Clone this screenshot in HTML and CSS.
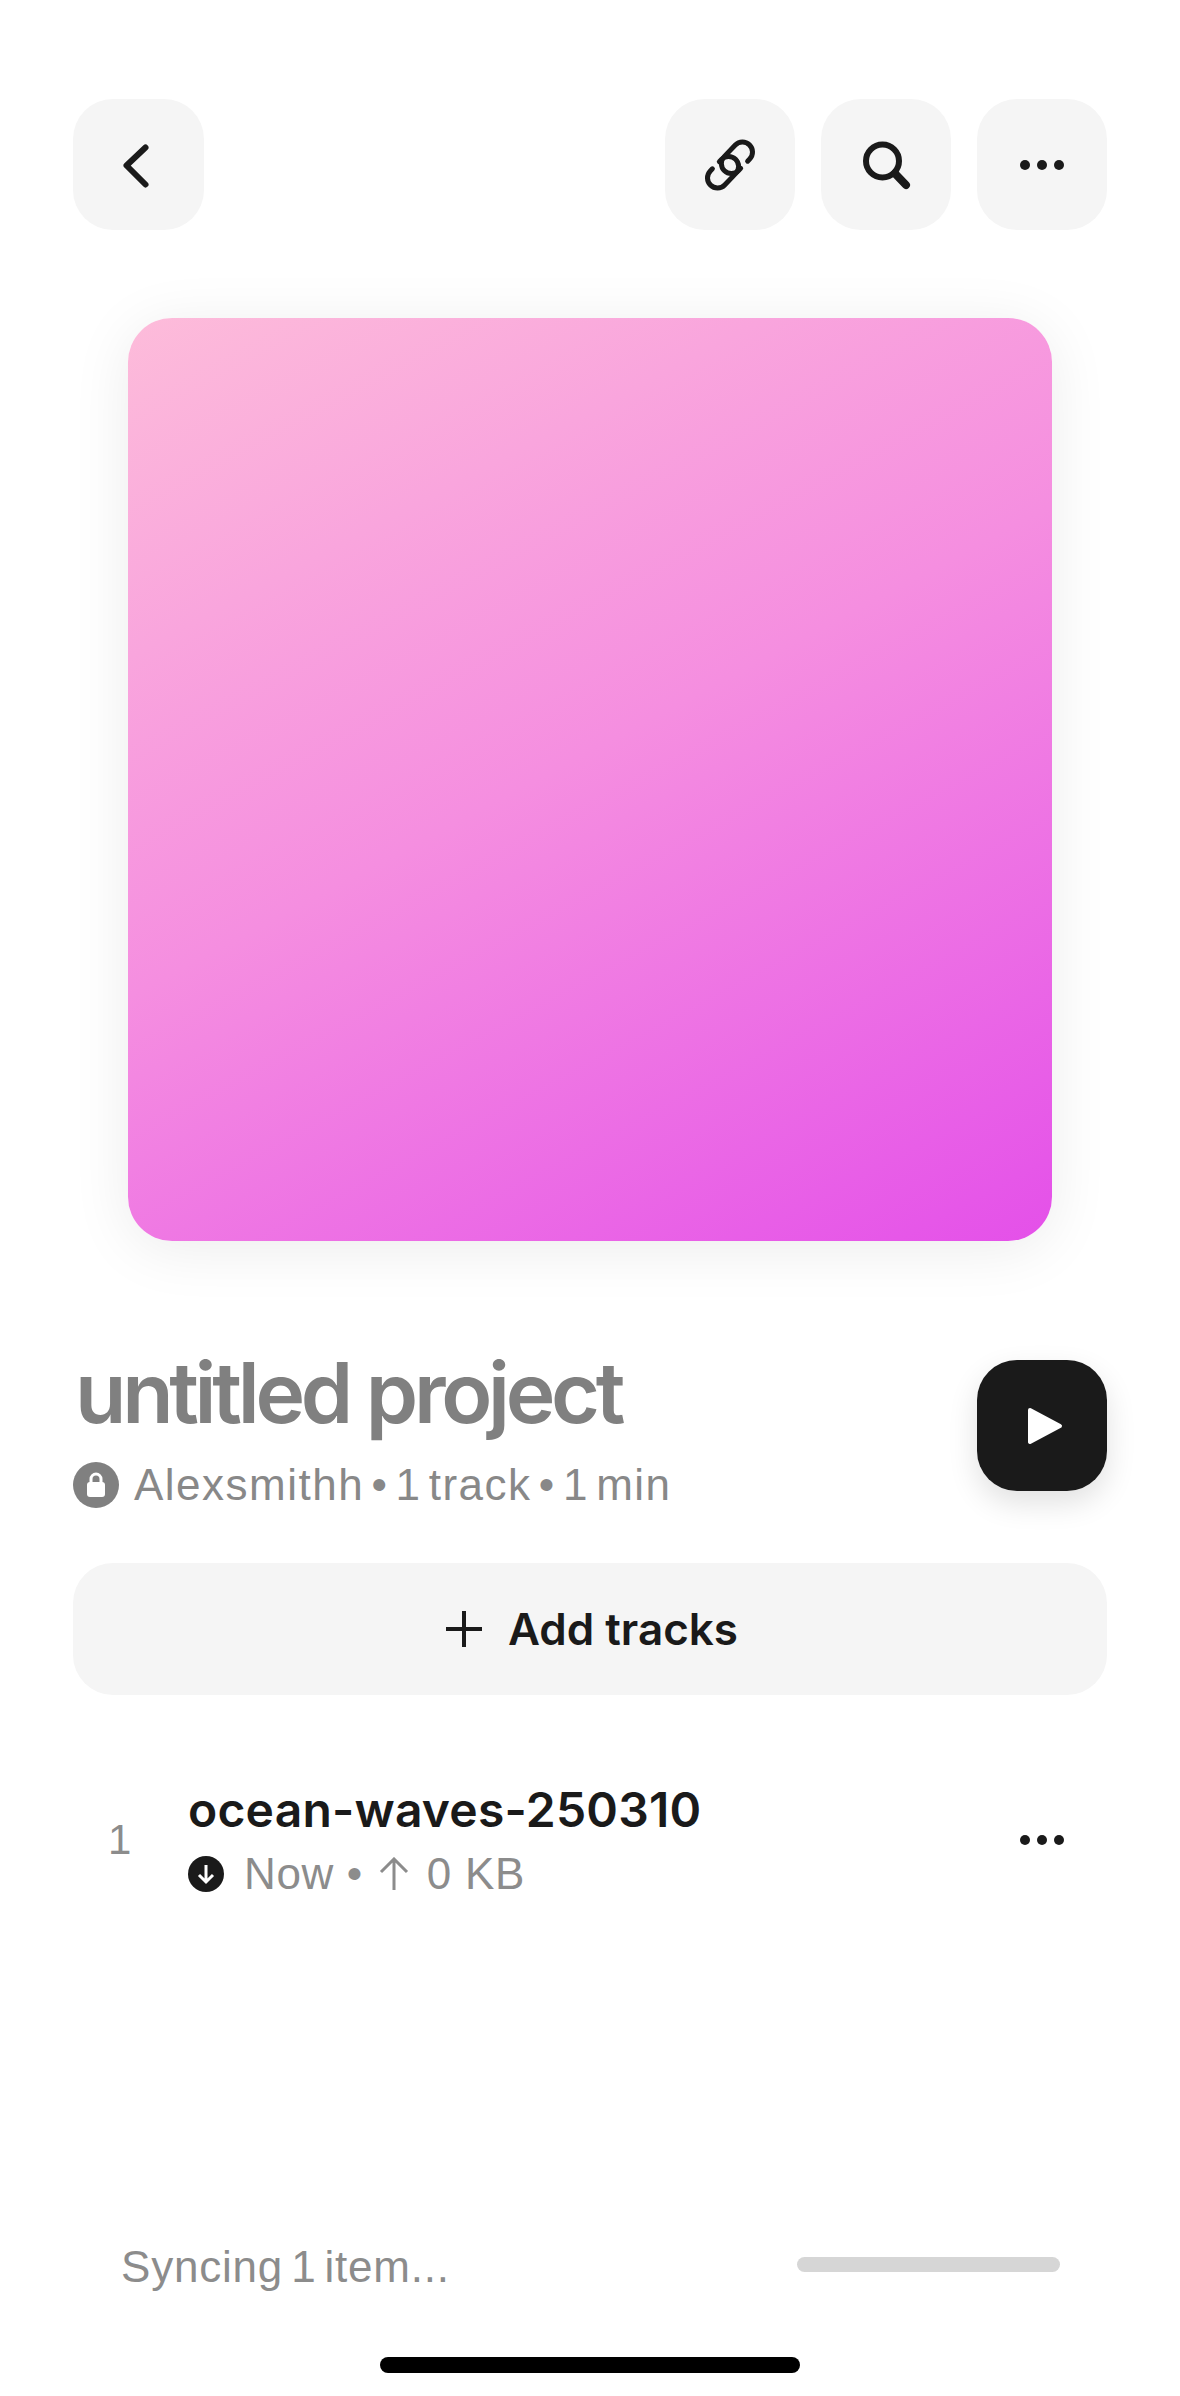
FILE: index.html
```html
<!DOCTYPE html>
<html lang="en">
<head>
    <meta charset="UTF-8">
    <meta name="viewport" content="width=device-width, initial-scale=1.0">
    <title>untitled project</title>
    <link rel="stylesheet" href="styles.css">
</head>
<body>
    <header class="top-bar">
        <button class="icon-btn back-btn">
            <svg width="60" height="60" viewBox="0 0 60 60"><path d="M36.5 12.5 L17.5 30.5 L36.5 49.5" class="line"/></svg>
        </button>
        <div class="top-actions">
            <button class="icon-btn">
                <svg width="60" height="60" viewBox="0 0 60 60">
                    <g transform="translate(30 30) rotate(-46)" class="line thin">
                        <path d="M-15 -10 H-18 A10 10 0 0 0 -18 10 H-2 A10 10 0 0 0 -2 -10 H-5"/>
                        <path d="M15 10 H18 A10 10 0 0 0 18 -10 H2 A10 10 0 0 0 2 10 H5"/>
                    </g>
                </svg>
            </button>
            <button class="icon-btn">
                <svg width="60" height="60" viewBox="0 0 60 60">
                    <circle cx="26.5" cy="26" r="16.5" class="line"/>
                    <path d="M39 38.5 L50 50" class="line heavy"/>
                </svg>
            </button>
            <button class="icon-btn">
                <span class="dots"><i></i><i></i><i></i></span>
            </button>
        </div>
    </header>

    <div class="cover"></div>

    <section class="project">
        <div class="project-info">
            <h1>untitled project</h1>
            <p class="meta">
                <span class="lock">
                    <svg width="24" height="28" viewBox="0 0 24 28"><path d="M7 12 V8 a5 5 0 0 1 10 0 V12" fill="none" stroke="#fff" stroke-width="3"/><rect x="3" y="11" width="18" height="15" rx="3" fill="#fff"/></svg>
                </span>
                Alexsmithh • 1 track • 1 min
            </p>
        </div>
        <button class="play-btn">
            <svg width="38" height="40" viewBox="0 0 38 40"><path d="M4 4 L34 20 L4 36 Z" fill="#fff" stroke="#fff" stroke-width="4" stroke-linejoin="round"/></svg>
        </button>
    </section>

    <button class="add-tracks">
        <svg width="38" height="38" viewBox="0 0 38 38"><path d="M19 1 V37 M1 19 H37" stroke="#1a1a1a" stroke-width="4" fill="none"/></svg>
        Add tracks
    </button>

    <div class="track">
        <span class="track-num">1</span>
        <div class="track-body">
            <div class="track-name">ocean-waves-250310</div>
            <div class="track-meta">
                <span class="status">
                    <svg width="20" height="22" viewBox="0 0 20 22"><path d="M10 2 V19 M3 12 L10 19 L17 12" stroke="#fff" stroke-width="3" fill="none"/></svg>
                </span>
                <span class="when">Now •</span>
                <svg class="up-arrow" width="32" height="34" viewBox="0 0 32 34"><path d="M16 33 V2 M3 15 L16 2 L29 15" stroke="#8c8c8c" stroke-width="3" fill="none"/></svg>
                <span class="size">0 KB</span>
            </div>
        </div>
        <span class="dots"><i></i><i></i><i></i></span>
    </div>

    <footer class="sync">
        <span class="sync-label">Syncing 1 item...</span>
        <span class="sync-bar"></span>
    </footer>

    <div class="home-bar"></div>
</body>
</html>
```

FILE: styles.css
```css
* {
    box-sizing: border-box;
}
body {
    margin: 0;
    padding: 99px 73px 23px;
    height: 2396px;
    background: #fff;
    font-family: "Liberation Sans", Arial, sans-serif;
    display: flex;
    flex-direction: column;
    overflow: hidden;
}
button {
    border: 0;
    padding: 0;
    font-family: inherit;
}
.line {
    fill: none;
    stroke: #1a1a1a;
    stroke-width: 6;
    stroke-linecap: round;
    stroke-linejoin: round;
}
.line.thin {
    stroke-width: 5;
}
.line.heavy {
    stroke-width: 8;
}
.top-bar {
    display: flex;
    justify-content: space-between;
}
.top-actions {
    display: flex;
    gap: 26px;
}
.icon-btn {
    width: 130px;
    height: 131px;
    border-radius: 40px;
    background: #f5f5f5;
    display: flex;
    align-items: center;
    justify-content: center;
}
.back-btn {
    width: 131px;
}
.dots {
    display: flex;
    gap: 7px;
}
.dots i {
    width: 10px;
    height: 10px;
    border-radius: 50%;
    background: #1a1a1a;
}
.cover {
    width: 924px;
    height: 923px;
    margin: 88px auto 0;
    border-radius: 44px;
    background: linear-gradient(152deg, #fdbcda 0%, #f58ee0 48%, #e450e9 100%);
    box-shadow: 0 8px 60px rgba(0, 0, 0, 0.08);
}
.project {
    margin-top: 119px;
    display: flex;
    justify-content: space-between;
}
.project h1 {
    margin: -6px 0 0;
    padding-left: 2px;
    font-family: Inter, "Liberation Sans", sans-serif;
    font-size: 84px;
    line-height: 78px;
    font-weight: 600;
    letter-spacing: -4.3px;
    color: #808080;
}
.meta {
    margin: 30px 0 0;
    display: flex;
    align-items: center;
    gap: 15px;
    font-size: 44px;
    line-height: 46px;
    letter-spacing: 1.5px;
    word-spacing: -6.5px;
    color: #888;
}
.lock {
    width: 46px;
    height: 46px;
    border-radius: 50%;
    background: #808080;
    display: flex;
    align-items: center;
    justify-content: center;
}
.play-btn {
    width: 130px;
    height: 131px;
    border-radius: 40px;
    background: #1a1a1a;
    display: flex;
    align-items: center;
    justify-content: center;
    padding-left: 6px;
    box-shadow: 0 12px 30px rgba(0, 0, 0, 0.12);
}
.add-tracks {
    margin-top: 55px;
    height: 132px;
    border-radius: 40px;
    background: #f5f5f5;
    display: flex;
    align-items: center;
    justify-content: center;
    gap: 25px;
    padding-left: 3px;
    font-family: Inter, "Liberation Sans", sans-serif;
    font-size: 44px;
    font-weight: 600;
    color: #1a1a1a;
    flex-shrink: 0;
}
.track {
    margin-top: 88px;
    display: flex;
    align-items: center;
}
.track-num {
    width: 115px;
    padding-left: 35px;
    font-size: 42px;
    color: #8c8c8c;
}
.track-body {
    flex: 1;
}
.track-name {
    font-family: Inter, "Liberation Sans", sans-serif;
    font-size: 48px;
    line-height: 54px;
    font-weight: 600;
    letter-spacing: 0.2px;
    color: #1a1a1a;
}
.track-meta {
    margin-top: 14px;
    display: flex;
    align-items: center;
    gap: 20px;
    font-size: 44px;
    line-height: 46px;
    color: #8c8c8c;
}
.when {
    letter-spacing: 0.6px;
}
.size {
    letter-spacing: 0.8px;
}
.status {
    width: 36px;
    height: 36px;
    border-radius: 50%;
    background: #1a1a1a;
    display: flex;
    align-items: center;
    justify-content: center;
}
.up-arrow {
    margin: 0 -3px 0 -5px;
}
.track > .dots {
    margin-right: 43px;
}
.sync {
    margin-top: auto;
    padding: 0 47px 0 48px;
    display: flex;
    align-items: center;
    justify-content: space-between;
}
.sync-label {
    font-size: 44px;
    line-height: 50px;
    letter-spacing: 0.8px;
    word-spacing: -5px;
    color: #8c8c8c;
}
.sync-bar {
    width: 263px;
    height: 15px;
    margin-bottom: 6px;
    border-radius: 8px;
    background: #d6d6d6;
}
.home-bar {
    width: 420px;
    height: 16px;
    margin: 65px auto 0;
    border-radius: 8px;
    background: #000;
}
```
